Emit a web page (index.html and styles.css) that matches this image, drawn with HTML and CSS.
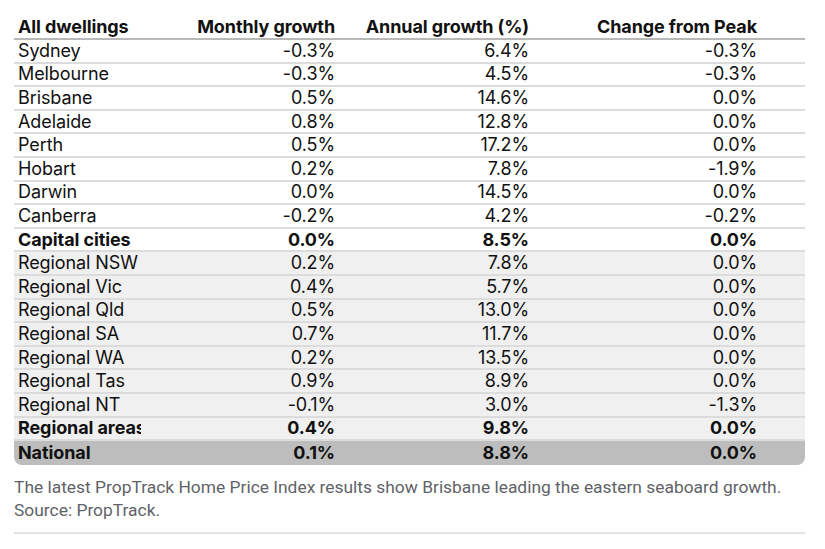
FILE: index.html
```html
<!DOCTYPE html>
<html>
<head>
<meta charset="utf-8">
<link rel="stylesheet" href="styles.css">
</head>
<body>
<figure class="figure">
  <table class="hpi">
    <colgroup>
      <col class="c-name"><col class="c-m"><col class="c-a"><col class="c-p">
    </colgroup>
    <thead>
      <tr><th class="name">All dwellings</th><th>Monthly growth</th><th>Annual growth (%)</th><th class="last">Change from Peak</th></tr>
    </thead>
    <tbody>
      <tr><td class="name">Sydney</td><td>-0.3%</td><td>6.4%</td><td class="last">-0.3%</td></tr>
      <tr><td class="name">Melbourne</td><td>-0.3%</td><td>4.5%</td><td class="last">-0.3%</td></tr>
      <tr><td class="name">Brisbane</td><td>0.5%</td><td>14.6%</td><td class="last">0.0%</td></tr>
      <tr><td class="name">Adelaide</td><td>0.8%</td><td>12.8%</td><td class="last">0.0%</td></tr>
      <tr><td class="name">Perth</td><td>0.5%</td><td>17.2%</td><td class="last">0.0%</td></tr>
      <tr><td class="name">Hobart</td><td>0.2%</td><td>7.8%</td><td class="last">-1.9%</td></tr>
      <tr><td class="name">Darwin</td><td>0.0%</td><td>14.5%</td><td class="last">0.0%</td></tr>
      <tr><td class="name">Canberra</td><td>-0.2%</td><td>4.2%</td><td class="last">-0.2%</td></tr>
      <tr class="total"><td class="name">Capital cities</td><td>0.0%</td><td>8.5%</td><td class="last">0.0%</td></tr>
      <tr class="reg"><td class="name">Regional NSW</td><td>0.2%</td><td>7.8%</td><td class="last">0.0%</td></tr>
      <tr class="reg"><td class="name">Regional Vic</td><td>0.4%</td><td>5.7%</td><td class="last">0.0%</td></tr>
      <tr class="reg"><td class="name">Regional Qld</td><td>0.5%</td><td>13.0%</td><td class="last">0.0%</td></tr>
      <tr class="reg"><td class="name">Regional SA</td><td>0.7%</td><td>11.7%</td><td class="last">0.0%</td></tr>
      <tr class="reg"><td class="name">Regional WA</td><td>0.2%</td><td>13.5%</td><td class="last">0.0%</td></tr>
      <tr class="reg"><td class="name">Regional Tas</td><td>0.9%</td><td>8.9%</td><td class="last">0.0%</td></tr>
      <tr class="reg"><td class="name">Regional NT</td><td>-0.1%</td><td>3.0%</td><td class="last">-1.3%</td></tr>
      <tr class="reg total"><td class="name"><span class="clip">Regional areas</span></td><td>0.4%</td><td>9.8%</td><td class="last">0.0%</td></tr>
      <tr class="national total"><td class="name">National</td><td>0.1%</td><td>8.8%</td><td class="last">0.0%</td></tr>
    </tbody>
  </table>
  <figcaption class="caption">The latest PropTrack Home Price Index results show Brisbane leading the eastern seaboard growth. Source: PropTrack.</figcaption>
</figure>
</body>
</html>
```

FILE: styles.css
```css
html, body {
  margin: 0;
  padding: 0;
  background: #ffffff;
}

.figure {
  margin: 0;
  padding: 12px 0 0 14px;
  width: 791px;
}

.hpi {
  width: 791px;
  border-collapse: separate;
  border-spacing: 0;
  table-layout: fixed;
  font-family: Inter, "Noto Sans", sans-serif;
  color: #111111;
}

.c-name { width: 180px; }
.c-m { width: 141px; }
.c-a { width: 194px; }
.c-p { width: 276px; }

.hpi th {
  font-size: 18px;
  font-weight: 700;
  height: 26px;
  line-height: 22px;
  padding: 0;
  text-align: right;
  vertical-align: bottom;
  border-bottom: 2px solid #b8b8b8;
  letter-spacing: -0.1px;
}

.hpi td {
  font-size: 18px;
  font-weight: 400;
  height: 21.6px;
  padding: 0;
  text-align: right;
  vertical-align: middle;
  border-bottom: 2px solid #dcdcdc;
  letter-spacing: -0.1px;
  line-height: 20px;
}

.hpi .name {
  text-align: left;
  padding-left: 4px;
  white-space: nowrap;
  overflow: hidden;
}

.hpi .last {
  padding-right: 48px;
}

.hpi tr.total td {
  font-weight: 700;
}

.hpi tr.reg td {
  background: #f0f0f0;
}

.clip {
  display: inline-block;
  width: 123px;
  overflow: hidden;
  white-space: nowrap;
  vertical-align: top;
}

.hpi tr.national td {
  background: #bdbdbd;
  border-bottom: none;
  height: 24px;
}

.hpi tr.national td:first-child {
  border-bottom-left-radius: 8px;
}

.hpi tr.national td:last-child {
  border-bottom-right-radius: 8px;
}

.caption {
  margin: 11px 0 0 0;
  padding: 0 0 10px 0;
  font-family: Roboto, "Noto Sans", sans-serif;
  font-size: 17.4px;
  line-height: 23px;
  color: #5f6368;
  border-bottom: 2px solid #e3e3e3;
}
```
